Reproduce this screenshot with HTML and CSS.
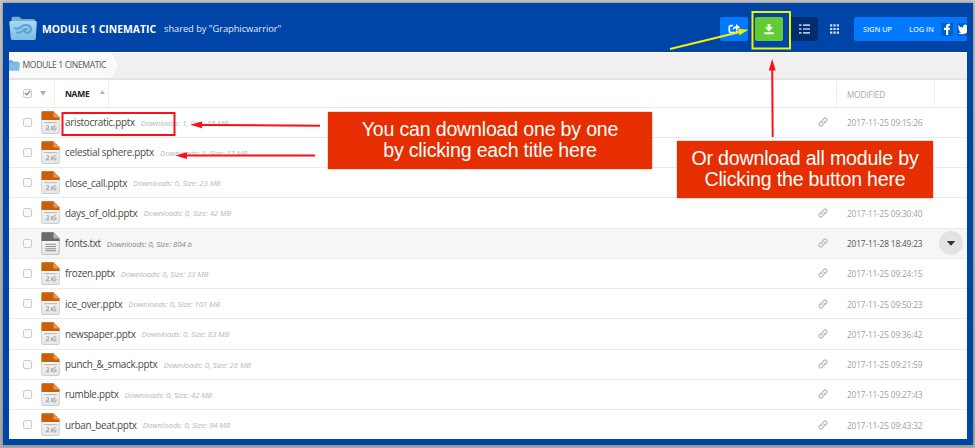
FILE: index.html
```html
<!DOCTYPE html>
<html lang="en">
<head>
<meta charset="utf-8">
<title>Module 1 Cinematic</title>
<link rel="stylesheet" href="styles.css">
</head>
<body>
<svg class="defs" width="0" height="0">
  <defs>
    <linearGradient id="fold" x1="0" y1="0" x2="0" y2="1"><stop offset="0" stop-color="#a9d8f3"/><stop offset="1" stop-color="#7dbce4"/></linearGradient>
    <linearGradient id="paper" x1="0" y1="0" x2="0" y2="1"><stop offset="0" stop-color="#fff"/><stop offset="1" stop-color="#e6e6e6"/></linearGradient>
    <symbol id="pptx" viewBox="0 0 19 23">
      <path d="M.7 1.5Q.7.5 1.7.5H12.5L18.3 6.5V21Q18.3 22.5 17 22.5H2Q.7 22.5.7 21Z" fill="url(#paper)" stroke="#c4c4c4" stroke-width=".8"/>
      <path d="M.5 1.5Q.5.3 1.7.3H12.5L18.5 6.5V9H.5Z" fill="#c95f06"/>
      <path d="M12.5.3L18.5 6.5H13.5Q12.5 6.5 12.5 5.5Z" fill="#e8975a"/>
      <path d="M3 11.7H16" stroke="#aaa" stroke-width=".9"/>
      <path d="M5 14.7H7.5V16.500L5.3 18.800H8.700M10.500 15V19M15.400 14.800Q12 14.200 11.600 17Q11.600 19.200 13.500 19Q15.300 18.800 15 17H12.500" fill="none" stroke="#b0b0b0" stroke-width="1.1"/>
    </symbol>
    <symbol id="txt" viewBox="0 0 19 23">
      <path d="M.7 1.5Q.7.5 1.7.5H12.5L18.3 6.5V21Q18.3 22.5 17 22.5H2Q.7 22.5.7 21Z" fill="url(#paper)" stroke="#b4b4b4" stroke-width=".8"/>
      <path d="M.5 1.5Q.5.3 1.7.3H12.5L18.5 6.5V9H.5Z" fill="#6b6b6b"/>
      <path d="M12.5.3L18.5 6.5H13.5Q12.5 6.5 12.5 5.5Z" fill="#b4b4b4"/>
      <path d="M4.5 12.3H15M4.5 14.5H15M4.5 16.7H15M4.5 18.8H15" stroke="#8a8a8a" stroke-width="1.1"/>
    </symbol>
    <symbol id="link" viewBox="0 0 10 10">
      <g fill="none" stroke="#bdbdbd" stroke-width="1.3" stroke-linecap="round"><path d="M4 5.8Q3 4.6 4 3.6L6 1.5Q7.2.5 8.4 1.6Q9.5 2.8 8.5 4L7.3 5.2"/><path d="M6 4.2Q7 5.4 6 6.4L4 8.5Q2.8 9.5 1.6 8.4Q.5 7.2 1.5 6L2.7 4.8"/></g>
    </symbol>
    <symbol id="folder" viewBox="0 0 28 25">
      <path d="M2.5 7V2Q2.5.7 4 .7H10Q11 .7 11.5 2L12 3H24.5Q26 3 26 4.5V8Z" fill="#72afd3"/>
      <path d="M1.5 5H26.7Q28 5 27.8 6.5L26.8 22.5Q26.7 24 25 24H3.5Q2 24 1.8 22.5L.3 6.5Q.2 5 1.5 5Z" fill="url(#fold)"/>
    </symbol>
  </defs>
</svg>

<div class="frame">
  <header class="bar">
    <svg class="logo" width="28" height="25" viewBox="0 0 28 25"><use href="#folder"/><g fill="none" stroke="#5ba3d0" stroke-width="2.200" stroke-linecap="round"><path d="M6 12.300Q9.500 13.500 12 11Q15.500 8 19.500 9.500Q23 11.500 21.500 15Q19.500 17.800 16.500 16.300Q15 14.500 17 13.500"/><path d="M8 16.500Q12 17.500 14 14.500Q15.500 12.500 18 12.800"/></g></svg>
    <h1 class="title">MODULE 1 CINEMATIC</h1>
    <span class="shared">shared by "Graphicwarrior"</span>
    <div class="tools">
      <span class="tool share"><svg width="12" height="10" viewBox="0 0 12 10"><path d="M5 1.7H2.8Q1.3 1.7 1.3 3.2V7Q1.3 8.5 2.8 8.5H7.5Q9 8.5 9 7V6.5" fill="none" stroke="#fff" stroke-width="1.7"/><path d="M8 0L12 3.3L8 6.5V4.5Q5.5 4.3 4.5 6Q4.7 2.3 8 2.2Z" fill="#fff"/></svg></span>
      <span class="tool download"><svg width="10" height="11" viewBox="0 0 10 11"><path d="M3.6 0H6.4V3.3H9L5 7.5L1 3.3H3.6ZM.3 8.3H9.7V10.3H.3Z" fill="#fff"/></svg></span>
      <span class="tool list"><svg width="11" height="10" viewBox="0 0 11 10"><path d="M0 1.2H2.5M4 1.2H11M0 5H2.5M4 5H11M0 8.8H2.5M4 8.8H11" stroke="#b8c4d8" stroke-width="1.7"/></svg></span>
      <span class="tool grid"><svg width="9" height="10" viewBox="0 0 9 10"><path d="M0 1.3H2.3M3.4 1.3H5.7M6.8 1.3H9M0 5H2.3M3.4 5H5.7M6.8 5H9M0 8.7H2.3M3.4 8.7H5.7M6.8 8.7H9" stroke="#d3deee" stroke-width="2.2"/></svg></span>
    </div>
    <div class="account">
      <span class="signup">SIGN UP</span><span class="login">LOG IN</span>
      <span class="social"><svg width="12" height="13" viewBox="0 0 12 13"><path d="M5 12V7H3V4.8H5V3.3Q5 .8 7.3.8H9V3H8Q7.2 3 7.2 3.8V4.8H9L8.7 7H7.2V12Z" fill="#fff"/></svg></span>
      <span class="social"><svg width="12" height="13" viewBox="0 0 12 13"><path d="M1.2 2.2Q3.2 4.6 6 4.5Q5.7 1.6 8.2 1.5Q9.2 1.5 10 2.3L12 1.7V4Q11.7 11.2 5 11.2Q2.5 11.2 1 10Q3 10.1 4.2 9.2Q2.5 9 2 7.4H3Q1.2 6.7 1.3 4.8L2.2 5Q.5 3.7 1.2 2.2Z" fill="#fff"/></svg></span>
    </div>
  </header>

  <nav class="crumbs">
    <svg class="crumb-folder" width="11" height="11" viewBox="0 0 11 11"><path d="M0 1Q0 .3.8.3H3Q3.6.3 4 1.8H9.5V3H0Z" fill="#65a8d5"/><path d="M0 2.8H11L10.3 10Q10.2 10.7 9.5 10.7H0Z" fill="#80bde7"/></svg>
    <span class="crumb">MODULE 1 CINEMATIC</span>
    <svg class="chevron" width="7" height="25" viewBox="0 0 7 25"><path d="M0 0L6 12.5L0 25Z" fill="#f9f9f9"/><path d="M0 0L6 12.5L0 25" fill="none" stroke="#fff"/></svg>
  </nav>

  <main class="files">
    <div class="head">
      <span class="box checked"><svg width="7" height="6" viewBox="0 0 7 6"><path d="M.8 3L2.7 4.8L6.2 1" fill="none" stroke="#909090" stroke-width="1.3"/></svg></span>
      <span class="caret"></span>
      <span class="name-head">NAME<i class="sort"></i></span>
      <span class="modified-head">MODIFIED</span>
    </div>
    <div class="row"><span class="box"></span><svg class="file"><use href="#pptx"/></svg><span class="name">aristocratic.pptx</span><em class="meta">Downloads: 1, Size: 15 MB</em><svg class="link"><use href="#link"/></svg><time>2017-11-25 09:15:26</time></div>
    <div class="row"><span class="box"></span><svg class="file"><use href="#pptx"/></svg><span class="name">celestial sphere.pptx</span><em class="meta">Downloads: 1, Size: 17 MB</em></div>
    <div class="row"><span class="box"></span><svg class="file"><use href="#pptx"/></svg><span class="name">close_call.pptx</span><em class="meta">Downloads: 0, Size: 23 MB</em></div>
    <div class="row"><span class="box"></span><svg class="file"><use href="#pptx"/></svg><span class="name">days_of_old.pptx</span><em class="meta">Downloads: 0, Size: 42 MB</em><svg class="link"><use href="#link"/></svg><time>2017-11-25 09:30:40</time></div>
    <div class="row active"><span class="box"></span><svg class="file"><use href="#txt"/></svg><span class="name">fonts.txt</span><em class="meta">Downloads: 0, Size: 804 b</em><svg class="link"><use href="#link"/></svg><time>2017-11-28 18:49:23</time><span class="more"></span></div>
    <div class="row"><span class="box"></span><svg class="file"><use href="#pptx"/></svg><span class="name">frozen.pptx</span><em class="meta">Downloads: 0, Size: 33 MB</em><svg class="link"><use href="#link"/></svg><time>2017-11-25 09:24:15</time></div>
    <div class="row"><span class="box"></span><svg class="file"><use href="#pptx"/></svg><span class="name">ice_over.pptx</span><em class="meta">Downloads: 0, Size: 101 MB</em><svg class="link"><use href="#link"/></svg><time>2017-11-25 09:50:23</time></div>
    <div class="row"><span class="box"></span><svg class="file"><use href="#pptx"/></svg><span class="name">newspaper.pptx</span><em class="meta">Downloads: 0, Size: 83 MB</em><svg class="link"><use href="#link"/></svg><time>2017-11-25 09:36:42</time></div>
    <div class="row"><span class="box"></span><svg class="file"><use href="#pptx"/></svg><span class="name">punch_&amp;_smack.pptx</span><em class="meta">Downloads: 0, Size: 26 MB</em><svg class="link"><use href="#link"/></svg><time>2017-11-25 09:21:59</time></div>
    <div class="row"><span class="box"></span><svg class="file"><use href="#pptx"/></svg><span class="name">rumble.pptx</span><em class="meta">Downloads: 0, Size: 42 MB</em><svg class="link"><use href="#link"/></svg><time>2017-11-25 09:27:43</time></div>
    <div class="row"><span class="box"></span><svg class="file"><use href="#pptx"/></svg><span class="name">urban_beat.pptx</span><em class="meta">Downloads: 0, Size: 94 MB</em><svg class="link"><use href="#link"/></svg><time>2017-11-25 09:43:32</time></div>
  </main>
</div>

<svg class="marks" width="975" height="448" viewBox="0 0 975 448">
  <g fill="none" stroke="#f8101a" stroke-width="2">
    <rect x="62.5" y="113" width="112" height="22"/>
    <path d="M200 125L320 125.8M184 155.5H315"/>
    <path d="M772.7 137L772.2 69"/>
  </g>
  <path d="M190.5 124.7L202 121.5V128.2ZM175.500 155.500L187 152.200V158.900ZM772.200 59L768.800 70.500H775.700Z" fill="#f8101a"/>
  <rect x="752.500" y="12" width="37.500" height="36.500" fill="none" stroke="#f3f000" stroke-width="2"/>
  <path d="M670 49L740 32" stroke="#f3f000" stroke-width="2"/>
  <path d="M748.500 29.800L738 28.800L739.500 35.300Z" fill="#f3f000"/>
</svg>
<div class="note note-left">You can download one by one<br>by clicking each title here</div>
<div class="note note-right">Or download all module by<br>Clicking the button here</div>
</body>
</html>
```
FILE: styles.css
```css
* { box-sizing: border-box; }
html, body { margin: 0; }
body {
  width: 975px;
  height: 448px;
  overflow: hidden;
  padding: 3px 2px 0 3px;
  background: linear-gradient(#c4c4c4, #a9a9a9);
  font-family: "Open Sans", sans-serif;
  position: relative;
}
.defs { position: absolute; }
.frame {
  width: 970px;
  height: 442px;
  padding: 0 6px 6px 6px;
  background: #0044a7;
  box-shadow: 0 0 3px #777;
  overflow: hidden;
}
.bar { height: 49px; display: flex; align-items: center; color: #fff; }
.logo { margin-top: 2px; }
.title {
  margin: 2px 0 0 5px;
  width: 116px;
  font-size: 10.4px;
  font-weight: 700;
  white-space: nowrap;
}
.shared { margin: 2px 0 0 6px; font-size: 9.3px; color: #e3ecf8; white-space: nowrap; letter-spacing: -.04px; }
.tools { display: flex; gap: 7px; margin-left: auto; margin-top: 3px; }
.tool { width: 28px; height: 24px; border-radius: 2px; display: flex; align-items: center; justify-content: center; }
.share { background: #0079ff; }
.download { background: #63cb33; }
.list { background: #002d70; }
.grid { margin-left: -5px; }
.account {
  width: 113px;
  height: 24px;
  margin: 3px 0 0 6px;
  padding-left: 9px;
  display: flex;
  align-items: center;
  overflow: hidden;
  border-radius: 2px 0 0 2px;
  background: #0079ff;
  font-size: 7.6px;
  font-weight: 600;
  letter-spacing: -.2px;
  color: #d6e9ff;
  white-space: nowrap;
}
.signup { flex: 0 0 46px; }
.login { flex: 0 0 32px; }
.social { flex: 0 0 12px; height: 13px; margin-right: 4px; background: #005fc9; }
.social svg { display: block; }
.crumbs {
  height: 28px;
  display: flex;
  align-items: center;
  background: #f0f0f0;
  border-bottom: 2px solid #e4e4e4;
  border-top: 1px solid #fff;
  color: #555;
  font-size: 8.6px;
}
.crumb-folder { background: #f9f9f9; box-shadow: 0 0 0 7px #f9f9f9; clip-path: inset(-7px 0); }
.crumb { flex: 0 0 91px; height: 25px; line-height: 25px; padding-left: 2.5px; background: #f9f9f9; white-space: nowrap; letter-spacing: -.37px; }
.files { height: 359px; background: #fff; overflow: hidden; }
.head { height: 27.5px; display: flex; align-items: center; border-bottom: 1px solid #e9e9e9; }
.box {
  flex: 0 0 9px;
  height: 9px;
  margin-left: 14px;
  border: 1px solid #ccc;
  border-radius: 2px;
  background: #fafafa;
}
.checked { display: flex; align-items: center; }
.caret { flex: 0 0 14px; margin-left: 8px; height: 5px; background: #aaa; clip-path: polygon(0 0, 6px 0, 3px 5px); }
.name-head {
  width: 55px;
  height: 26px;
  line-height: 28px;
  padding-left: 10px;
  border: solid #eee;
  border-width: 0 1px;
  color: #222;
  font-size: 8.5px;
  font-weight: 700;
  letter-spacing: -.3px;
}
.sort { display: inline-block; width: 6px; height: 4px; margin: 0 0 3px 10px; background: #bbb; clip-path: polygon(3px 0, 6px 4px, 0 4px); }
.modified-head {
  width: 99px;
  height: 26px;
  line-height: 29px;
  margin: 0 32px 0 auto;
  padding-left: 10px;
  border: solid #eee;
  border-width: 0 1px;
  color: #aaa;
  font-size: 8.4px;
  letter-spacing: -.22px;
}
.row { height: 30.25px; display: flex; align-items: center; border-bottom: 1px solid #ececec; white-space: nowrap; }
.file { flex: 0 0 19px; height: 23px; margin-left: 9px; }
.name { margin-left: 5px; font-size: 9.9px; color: #484848; letter-spacing: -.28px; }
.meta { margin: 1px 0 0 6px; font-size: 7.8px; color: #b8b8b8; letter-spacing: -.08px; }
.link { flex: 0 0 10px; height: 10px; margin-left: auto; }
time { flex: 0 0 120px; margin: 1px 0 0 19px; font-size: 8.3px; color: #a0a0a0; letter-spacing: -.15px; }
.active { background: #f6f6f6; }
.active .meta { color: #888; }
.active time { flex-basis: 92px; color: #555; }
.more { flex: 0 0 24px; height: 24px; margin-right: 4px; border-radius: 50%; background: #e3e3e3; display: flex; align-items: center; justify-content: center; }
.more::after { content: ""; width: 9px; height: 5px; background: #333; clip-path: polygon(0 0, 100% 0, 50% 100%); }
.marks { position: absolute; left: 0; top: 0; }
.note {
  position: absolute;
  height: 57px;
  padding-top: 7px;
  background: #e62e00;
  box-shadow: 0 0 1px #e62e00;
  color: #fff;
  font: 19.6px/20.5px "Liberation Sans", Arial, sans-serif;
  letter-spacing: -.2px;
  text-align: center;
  white-space: nowrap;
}
.note-left { left: 328px; top: 112px; width: 324px; }
.note-right { left: 677px; top: 141px; width: 256px; }
```
